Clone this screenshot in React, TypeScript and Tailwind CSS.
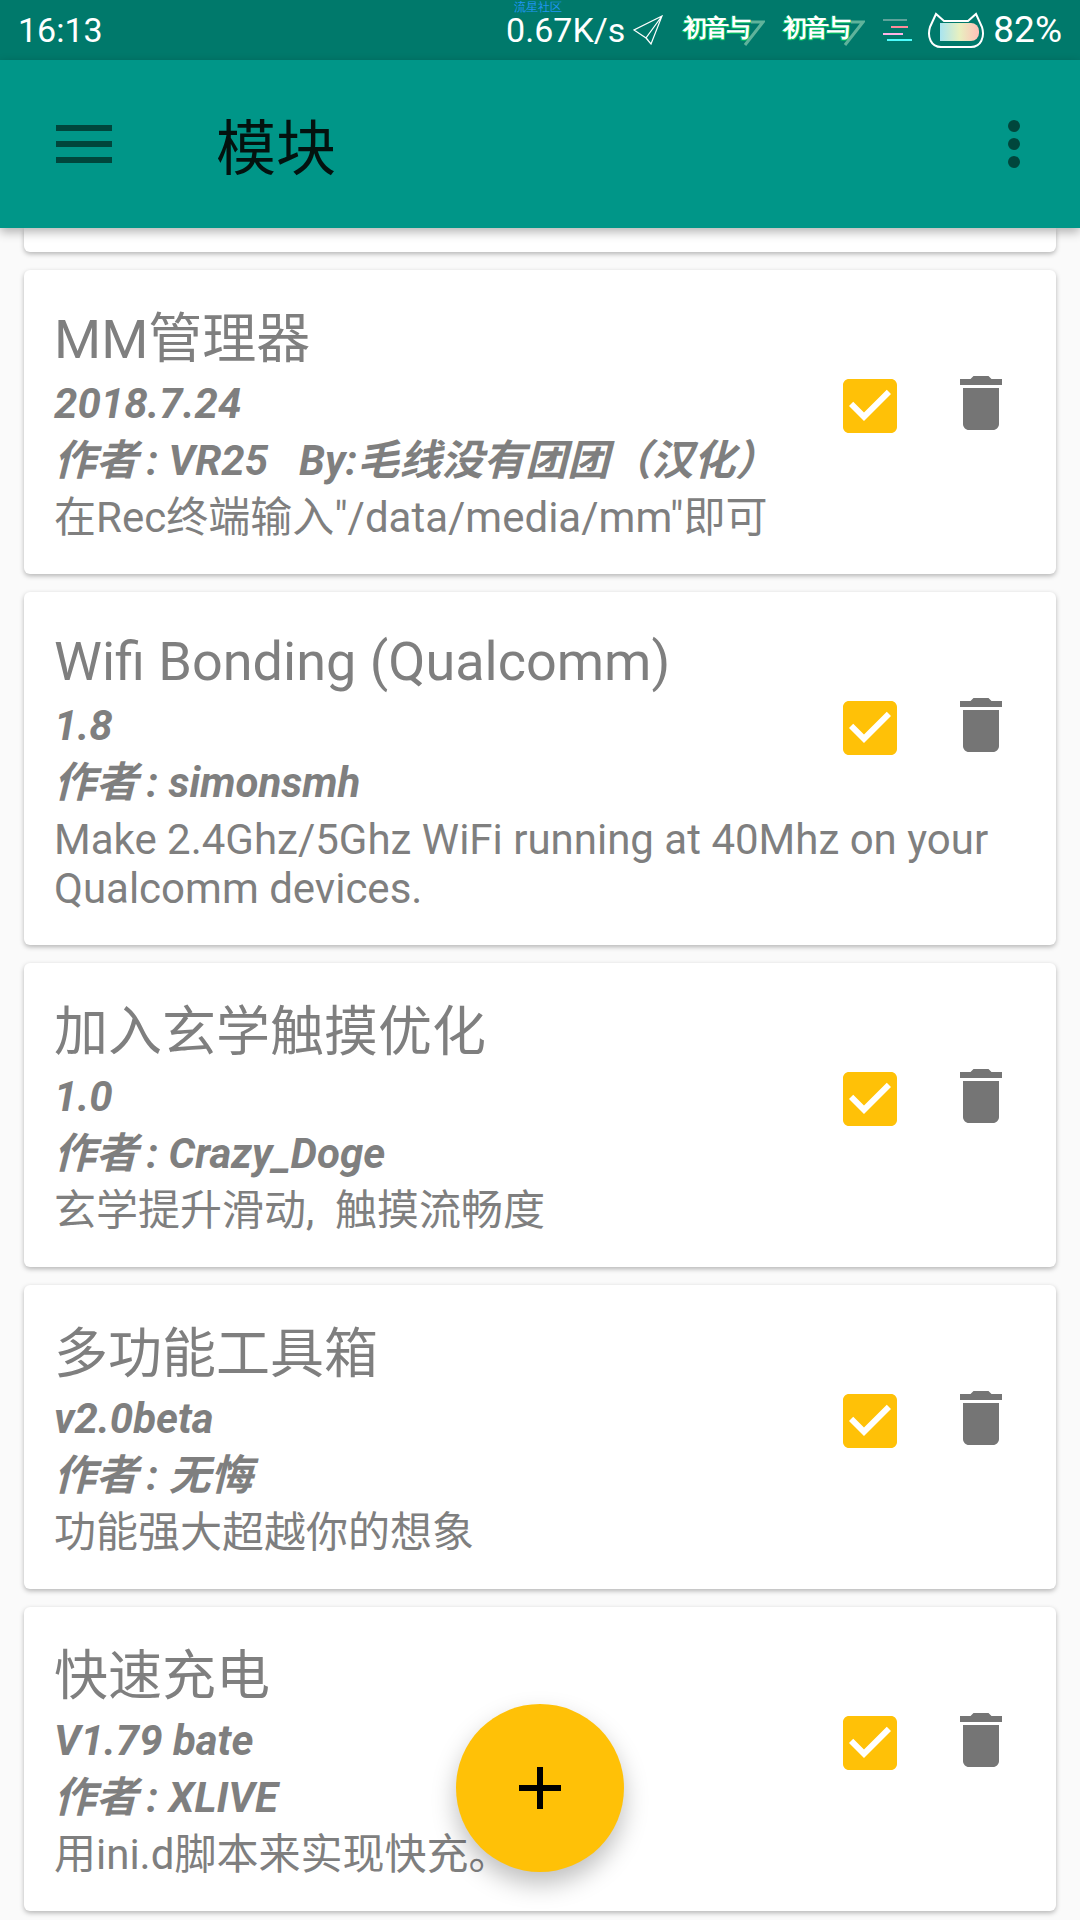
const modules = [
  {
    title: "MM管理器",
    version: "2018.7.24",
    author: "作者\u2009: VR25   By:毛线没有团团（汉化）",
    desc: ["在Rec终端输入\"/data/media/mm\"即可"],
  },
  {
    title: "Wifi Bonding (Qualcomm)",
    version: "1.8",
    author: "作者\u2009: simonsmh",
    desc: ["Make 2.4Ghz/5Ghz WiFi running at 40Mhz on your", "Qualcomm devices."],
  },
  {
    title: "加入玄学触摸优化",
    version: "1.0",
    author: "作者\u2009: Crazy_Doge",
    desc: ["玄学提升滑动,\u00a0 触摸流畅度"],
  },
  {
    title: "多功能工具箱",
    version: "v2.0beta",
    author: "作者\u2009: 无悔",
    desc: ["功能强大超越你的想象"],
  },
  {
    title: "快速充电",
    version: "V1.79 bate",
    author: "作者\u2009: XLIVE",
    desc: ["用ini.d脚本来实现快充。"],
  },
];

function HatsuneLogo() {
  return (
    <div className="relative w-[82px] h-[40px] shrink-0">
      <span className="block text-[24px] leading-[36px] tracking-[-2px] font-bold text-white whitespace-nowrap [text-shadow:1px_1px_0_#00c060,-1px_1px_0_#00c060]">
        初音与
      </span>
      <svg viewBox="0 0 22 26" className="absolute right-0 top-[10px] w-[22px] h-[26px]" fill="none" stroke="#5fb39b" strokeWidth="3">
        <path d="M8 2h12L2 25" />
      </svg>
    </div>
  );
}

function StatusBar() {
  return (
    <div className="relative flex items-center h-[60px] pl-[18px] pr-[18px] bg-[#00796b] text-white text-[34px] font-[Roboto,sans-serif]">
      <span className="leading-[34px]">16:13</span>
      <span className="absolute left-[514px] top-[1px] text-[12px] leading-[12px] text-[#2196f3]">流星社区</span>
      <div className="ml-auto flex items-center">
        <span className="leading-[34px] mr-[8px]">0.67K/s</span>
        <svg viewBox="0 0 30 30" className="w-[30px] h-[30px] mr-[20px]" fill="none" stroke="#fff" strokeWidth="1.2">
          <path d="M29 1 1 15l12 8 5 6zM29 1 13 23l2 2" />
        </svg>
        <HatsuneLogo />
        <div className="w-[18px]" />
        <HatsuneLogo />
        <div className="w-[18px] flex-none" />
        <svg viewBox="0 0 30 22" className="w-[30px] h-[22px] mr-[14px]">
          <rect x="0" y="0" width="24" height="2" fill="#5fa39b" />
          <rect x="8" y="7" width="17" height="2" fill="#ff8a9a" />
          <rect x="0" y="14" width="20" height="2" fill="#ffb3e6" />
          <rect x="4" y="20" width="25" height="2" fill="#4dfcfc" />
        </svg>
        <svg viewBox="0 0 58 36" className="w-[58px] h-[36px] mr-[8px]">
          <defs>
            <linearGradient id="batt" x1="0" x2="1" y1="0" y2="0">
              <stop offset="0" stopColor="#a8e4f0" />
              <stop offset="0.5" stopColor="#e8f0c0" />
              <stop offset="1" stopColor="#ffc0b8" />
            </linearGradient>
          </defs>
          <path d="M3 15 9 2l8 7h24l8-7 6 13c3 10-1 20-11 20H14C4 35 0 25 3 15Z" fill="none" stroke="#fff" strokeWidth="2" />
          <path d="M13 11h31a8 8 0 0 1 8 8v2a8 8 0 0 1-8 8H13Z" fill="url(#batt)" />
        </svg>
        <span className="leading-[34px] text-[37px]">82%</span>
      </div>
    </div>
  );
}

function AppBar() {
  return (
    <div className="relative z-10 flex items-center h-[168px] bg-[#009688] shadow-[0_4px_10px_rgba(0,0,0,0.3)]">
      <div className="ml-[56px] w-[56px] flex flex-col gap-[10px]">
        <div className="h-[6px] bg-[#00463c]" />
        <div className="h-[6px] bg-[#00463c]" />
        <div className="h-[6px] bg-[#00463c]" />
      </div>
      <span className="ml-[104px] mt-[12px] text-[60px] leading-[64px] text-[#03120f]">模块</span>
      <div className="ml-auto mr-[60px] flex flex-col gap-[6px]">
        <div className="w-[12px] h-[12px] rounded-full bg-[#00463c]" />
        <div className="w-[12px] h-[12px] rounded-full bg-[#00463c]" />
        <div className="w-[12px] h-[12px] rounded-full bg-[#00463c]" />
      </div>
    </div>
  );
}

function ModuleCard({ m }: { m: (typeof modules)[number] }) {
  return (
    <div className="relative flex rounded-[6px] bg-white pl-[30px] pr-[39px] pt-[35px] pb-[32px] shadow-[0_2px_5px_rgba(0,0,0,0.28)] text-[#7f7f7f]">
      <div className="flex-1 min-w-0">
        <div className="text-[54px] leading-[70px] whitespace-nowrap">{m.title}</div>
        <div className="text-[42px] leading-[57px] font-bold italic whitespace-nowrap">{m.version}</div>
        <div className="text-[42px] leading-[58px] font-bold italic whitespace-pre">{m.author}</div>
        <div className="mt-[3px] text-[42px] leading-[49px] whitespace-nowrap">
          {m.desc.map((line) => (
            <div key={line}>{line}</div>
          ))}
        </div>
      </div>
      <div className="flex items-start gap-[39px] mt-[62px] h-[75px]">
        <svg viewBox="0 0 24 24" className="w-[72px] h-[72px] mt-[3px]" fill="#ffc107">
          <path d="M19 3H5c-1.11 0-2 .9-2 2v14c0 1.1.89 2 2 2h14c1.11 0 2-.89 2-2V5c0-1.1-.89-2-2-2zm-9 14l-5-5 1.41-1.41L10 14.17l7.59-7.59L19 8l-9 9z" />
        </svg>
        <svg viewBox="0 0 24 24" className="w-[72px] h-[72px]" fill="#757575">
          <path d="M6 19c0 1.1.9 2 2 2h8c1.1 0 2-.9 2-2V7H6v12zM19 4h-3.5l-1-1h-5l-1 1H5v2h14V4z" />
        </svg>
      </div>
    </div>
  );
}

export default function App() {
  return (
    <div className="relative w-[1080px] h-[1920px] overflow-hidden bg-[#fafafa] font-[Roboto,'Noto_Sans_CJK_SC',sans-serif]">
      <StatusBar />
      <AppBar />
      <div className="flex flex-col gap-[18px] px-[24px]">
        <div className="h-[24px] rounded-b-[6px] bg-white shadow-[0_2px_5px_rgba(0,0,0,0.28)]" />
        {modules.map((m) => (
          <ModuleCard key={m.title} m={m} />
        ))}
      </div>
      <button className="absolute left-[456px] top-[1704px] z-20 flex items-center justify-center w-[168px] h-[168px] rounded-full bg-[#ffc107] shadow-[0_12px_24px_rgba(0,0,0,0.25)]">
        <svg viewBox="0 0 42 42" className="w-[42px] h-[42px]" fill="#000">
          <path d="M18 0h6v18h18v6H24v18h-6V24H0v-6h18z" />
        </svg>
      </button>
    </div>
  );
}
